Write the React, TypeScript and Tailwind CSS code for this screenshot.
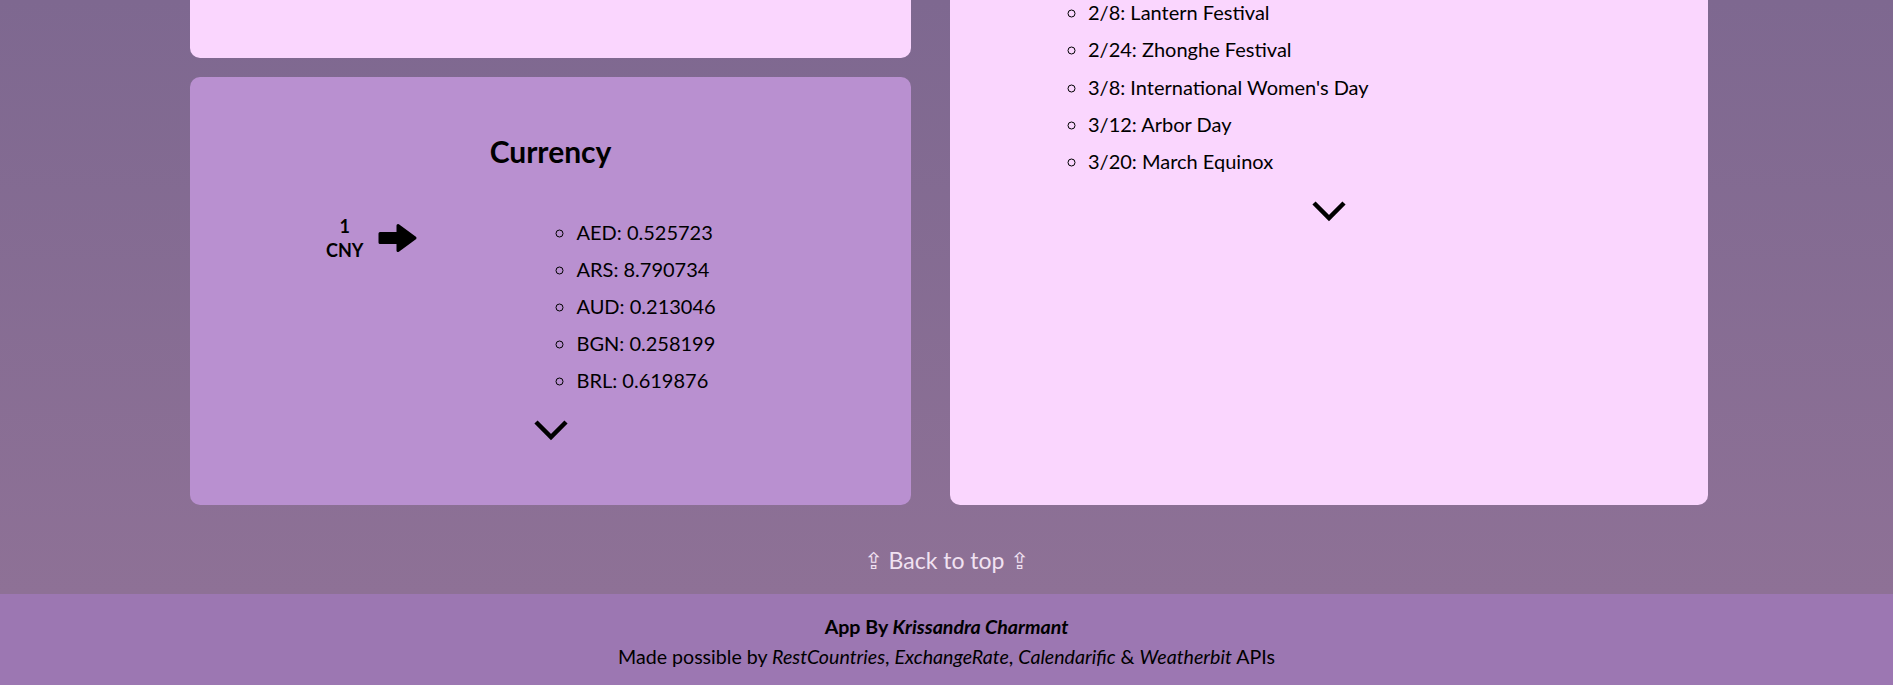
const rates = [
  ["AED", "0.525723"],
  ["ARS", "8.790734"],
  ["AUD", "0.213046"],
  ["BGN", "0.258199"],
  ["BRL", "0.619876"],
]

const holidays = [
  "2/8: Lantern Festival",
  "2/24: Zhonghe Festival",
  "3/8: International Women's Day",
  "3/12: Arbor Day",
  "3/20: March Equinox",
]

function Chevron() {
  return (
    <svg width="36" height="22" viewBox="0 0 36 22" fill="none" xmlns="http://www.w3.org/2000/svg">
      <path d="M3 3L18 18L33 3" stroke="#000" strokeWidth="4.5" strokeLinejoin="miter" />
    </svg>
  )
}

function ArrowRight() {
  return (
    <svg width="40" height="30" viewBox="0 0 40 30" xmlns="http://www.w3.org/2000/svg">
      <path
        d="M2 10.5H20V2.5L37 15L20 27.5V19.5H2Z"
        fill="#000"
        stroke="#000"
        strokeWidth="3"
        strokeLinejoin="round"
      />
    </svg>
  )
}

export default function App() {
  return (
    <div className="font-['Lato','Liberation_Sans',sans-serif] text-black">
      <main className="bg-gradient-to-b from-[#7e6890] to-[#8e7196] h-[594px]">
        <div className="ml-[190px] w-[1518px] flex gap-[39px]">
          <div className="w-[721px] flex flex-col gap-[19px]">
            <div className="h-[58px] bg-[#fad6fe] rounded-b-[10px]"></div>
            <section className="h-[428px] bg-[#b990d0] rounded-[10px] pt-[56px] flex flex-col items-center">
              <h2 className="text-[30px] leading-[36px] font-bold">Currency</h2>
              <div className="w-full flex items-start mt-[45px]">
                <div className="ml-[136px] flex items-center gap-[15px]">
                  <div className="text-[18px] leading-[24px] font-bold text-center">
                    <div>1</div>
                    <div>CNY</div>
                  </div>
                  <ArrowRight />
                </div>
                <ul className="ml-[118px] pl-10 list-[circle] text-[20px] leading-[37px]">
                  {rates.map(([code, value]) => (
                    <li key={code}>
                      {code}: {value}
                    </li>
                  ))}
                </ul>
              </div>
              <div className="mt-[20px]">
                <Chevron />
              </div>
            </section>
          </div>
          <section className="w-[758px] bg-[#fad6fe] rounded-b-[10px] flex flex-col items-center">
            <ul className="self-start ml-[98px] -mt-[6px] pl-10 list-[circle] text-[20px] leading-[37.25px]">
              {holidays.map((h) => (
                <li key={h}>{h}</li>
              ))}
            </ul>
            <div className="mt-[20px]">
              <Chevron />
            </div>
          </section>
        </div>
        <div className="mt-[40px] text-center">
          <a href="#" className="text-[23px] leading-[30px] text-[#f1e2f2]">
            ⇪ Back to top ⇪
          </a>
        </div>
      </main>
      <footer className="bg-[#9c77b2] h-[91px] pt-[18px] text-center text-[19.6px] leading-[30px]">
        <div className="font-bold">
          App By <i>Krissandra Charmant</i>
        </div>
        <div>
          Made possible by <i>RestCountries</i>, <i>ExchangeRate</i>, <i>Calendarific</i> &amp; <i>Weatherbit</i> APIs
        </div>
      </footer>
    </div>
  )
}
